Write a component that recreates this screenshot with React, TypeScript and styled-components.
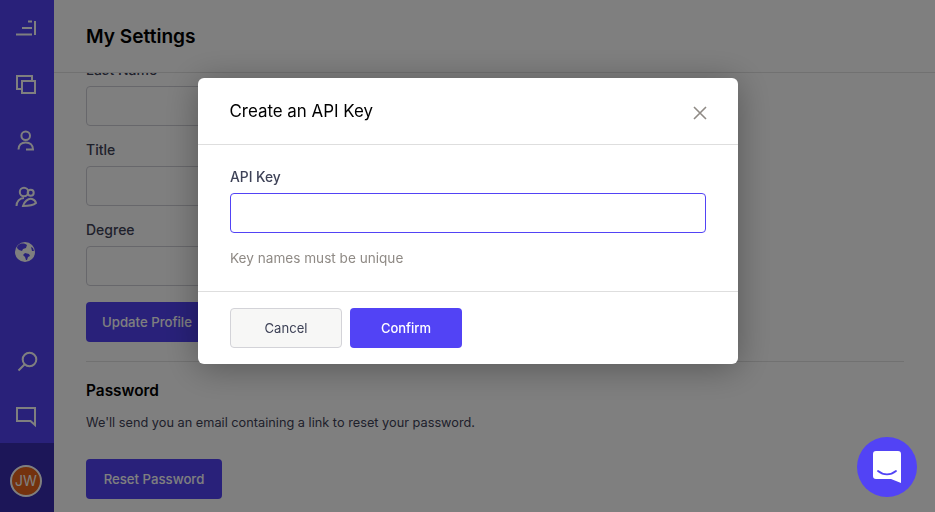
import React from "react";
import styled, { createGlobalStyle } from "styled-components";

const Global = createGlobalStyle`
  html, body { margin: 0; padding: 0; height: 100%; background: #fff; overflow: hidden; }
  #root { height: 100%; }
  * { box-sizing: border-box; }
  body { font-family: Inter, "Liberation Sans", sans-serif; -webkit-font-smoothing: antialiased; }
`;

const Page = styled.div`
  display: flex;
  width: 935px;
  height: 512px;
`;

const Sidebar = styled.nav`
  width: 54px;
  flex: none;
  display: flex;
  flex-direction: column;
  background: #5243f5;
  color: #fff;
`;

const NavGroup = styled.div`
  display: flex;
  flex-direction: column;
  align-items: center;
  gap: 26px;
  padding-top: 12px;
`;

const NavBottom = styled.div`
  margin-top: auto;
  display: flex;
  flex-direction: column;
  align-items: center;
  gap: 22px;
  padding: 0 0 11px;
`;

const NavIcon = styled.svg`
  display: block;
  width: 30px;
  height: 30px;
  fill: none;
  stroke: #fff;
  stroke-width: 2;
`;

const UserTray = styled.div`
  height: 69px;
  background: #382cb0;
  display: flex;
  align-items: center;
  justify-content: center;
  padding: 6px 2px 0 0;
`;

const Avatar = styled.div`
  width: 32px;
  height: 32px;
  border-radius: 50%;
  border: 2px solid #fff;
  background: #e8641c;
  color: #fff;
  font-size: 14px;
  display: flex;
  align-items: center;
  justify-content: center;
`;

const Main = styled.main`
  flex: 1;
  min-width: 0;
  display: flex;
  flex-direction: column;
`;

const Header = styled.header`
  height: 73px;
  flex: none;
  padding: 1px 32px 0;
  display: flex;
  align-items: center;
  border-bottom: 1px solid #e2e2e2;
  position: relative;
  z-index: 1;
  background: #fff;
`;

const PageTitle = styled.h1`
  margin: 0 0 1px;
  font-size: 19.1px;
  font-weight: 600;
  line-height: 28px;
  color: #000;
`;

const Scroller = styled.div`
  flex: 1;
  overflow: hidden;
  padding: 0 31px 0 32px;
`;

const ScrollInner = styled.div`
  margin-top: -12px;
`;

const Field = styled.div`
  display: flex;
  flex-direction: column;
  gap: 7px;
  margin-bottom: 15px;
  &:nth-child(3) {
    margin-bottom: 16px;
  }
`;

const FieldLabel = styled.label`
  font-size: 14px;
  line-height: 18px;
  font-weight: 500;
  color: #3e4257;
`;

const TextBox = styled.div`
  width: 420px;
  height: 40px;
  border: 1px solid #cfcfd6;
  border-radius: 4px;
  background: #fff;
`;

const PrimaryButton = styled.button`
  height: 40px;
  border: 0;
  border-radius: 4px;
  background: #5243f5;
  color: #fff;
  font: 500 13.2px Inter, "Liberation Sans", sans-serif;
  width: ${(p: { $w: number }) => p.$w}px;
  padding: 0;
  display: block;
`;

const Divider = styled.hr`
  border: 0;
  border-top: 1px solid #e2e2e2;
  margin: 19px 0 0;
`;

const SectionTitle = styled.h2`
  margin: 18px 0 0;
  font-size: 15.4px;
  line-height: 22px;
  font-weight: 600;
  color: #000;
`;

const SectionText = styled.p`
  margin: 12px 0 27px;
  font-size: 12.75px;
  line-height: 18px;
  color: #3e4257;
`;

const Overlay = styled.div`
  position: fixed;
  inset: 0;
  z-index: 5;
  background: rgba(0, 0, 0, 0.5);
  display: flex;
  justify-content: center;
  align-items: flex-start;
  padding-top: 78px;
`;

const Modal = styled.div`
  width: 540px;
  height: 286px;
  margin-left: 1px;
  background: #fff;
  border-radius: 6px;
  box-shadow: 0 4px 34px rgba(0, 0, 0, 0.32);
  display: flex;
  flex-direction: column;
`;

const ModalHeader = styled.div`
  height: 67px;
  flex: none;
  display: flex;
  align-items: center;
  justify-content: space-between;
  padding: 0 31px 0 31.5px;
  border-bottom: 1px solid #dedede;
`;

const ModalTitle = styled.h3`
  margin: 0;
  font-size: 16.9px;
  line-height: 24px;
  font-weight: 400;
  color: #000;
`;

const CloseIcon = styled.svg`
  width: 14px;
  height: 14px;
  stroke: #8f8a85;
  stroke-width: 1.6;
  fill: none;
  margin-top: 3px;
`;

const ModalBody = styled.div`
  flex: 1;
  padding: 22px 32px 0;
  display: flex;
  flex-direction: column;
  border-bottom: 1px solid #dedede;
`;

const ModalLabel = styled.label`
  font-size: 13.8px;
  line-height: 20px;
  font-weight: 500;
  color: #3e4257;
`;

const KeyInput = styled.input`
  width: 476px;
  height: 40px;
  margin-top: 6px;
  border: 1px solid #5243f5;
  border-radius: 4px;
  background: #fff;
  outline: none;
`;

const Hint = styled.p`
  margin: 15px 0 0;
  font-size: 13.6px;
  line-height: 20px;
  color: #8f8a85;
`;

const ModalFooter = styled.div`
  height: 72px;
  flex: none;
  display: flex;
  align-items: flex-start;
  gap: 8px;
  padding: 16px 32px 0;
`;

const CancelButton = styled.button`
  width: 112px;
  height: 40px;
  border: 1px solid #d3d3d8;
  border-radius: 4px;
  background: #f7f7f6;
  color: #3e4257;
  font: 400 13.1px Inter, "Liberation Sans", sans-serif;
  padding: 0 0 1px;
`;

const ConfirmButton = styled.button`
  width: 112px;
  height: 40px;
  border: 0;
  border-radius: 4px;
  background: #5243f5;
  color: #fff;
  font: 500 13px Inter, "Liberation Sans", sans-serif;
  padding: 0 0 1px;
`;

const Launcher = styled.div`
  position: fixed;
  z-index: 10;
  right: 18px;
  bottom: 15px;
  width: 60px;
  height: 60px;
  border-radius: 50%;
  background: #5243f5;
  display: flex;
  align-items: center;
  justify-content: center;
`;

export default function App() {
  return (
    <Page>
      <Global />
      <Sidebar>
        <NavGroup>
          <NavIcon viewBox="0 0 30 30">
            <path d="M16 9.500h4M10 16h10M4 22.500h16M23 9v14" />
          </NavIcon>
          <NavIcon viewBox="0 0 30 30">
            <path d="M10 21H5V8h15v5M10 13h13v12H10z" />
          </NavIcon>
          <NavIcon viewBox="0 0 30 30" strokeWidth="1.800">
            <circle cx="13.700" cy="11.700" r="4.300" />
            <path d="M6.500 25.500c0-4.500 3-7 7.200-7s7.300 2.500 7.300 7h-7" />
          </NavIcon>
          <NavIcon viewBox="0 0 30 30" strokeWidth="1.800">
            <circle cx="12" cy="12" r="4.200" />
            <circle cx="18.700" cy="12.700" r="3" />
            <path d="M4.500 26c0-4.500 3-8 7.500-8M11 26c1-4 5-8 9-7 2 .5 3.500 2 4 4-3 2.500-7 3-13 3z" />
          </NavIcon>
          <NavIcon viewBox="0 0 30 30" style={{ stroke: "none" }}>
            <circle cx="13" cy="16" r="10" fill="#fff" />
            <path d="M8 8c3-1 6 0 7 1l-1 3-3 1-1 2-3-1-2-2c0-2 1-3 3-4zM13 17l4 1 1 2-2 1-1 3h-1l-1-3-2-2zM19 11l2 1 1 3-2 0z" fill="#5243f5" />
          </NavIcon>
        </NavGroup>
        <NavBottom>
          <NavIcon viewBox="0 0 30 30">
            <circle cx="17.500" cy="9.500" r="6.800" />
            <path d="M12.500 14.500l-6 6" />
          </NavIcon>
          <NavIcon viewBox="0 0 30 30">
            <path d="M5 6h18v17l-4.500-4H5z" />
          </NavIcon>
        </NavBottom>
        <UserTray>
          <Avatar>JW</Avatar>
        </UserTray>
      </Sidebar>
      <Main>
        <Header>
          <PageTitle>My Settings</PageTitle>
        </Header>
        <Scroller>
          <ScrollInner>
            <Field>
              <FieldLabel>Last Name</FieldLabel>
              <TextBox />
            </Field>
            <Field>
              <FieldLabel>Title</FieldLabel>
              <TextBox />
            </Field>
            <Field>
              <FieldLabel>Degree</FieldLabel>
              <TextBox />
            </Field>
            <PrimaryButton $w={122}>Update Profile</PrimaryButton>
            <Divider />
            <SectionTitle>Password</SectionTitle>
            <SectionText>We'll send you an email containing a link to reset your password.</SectionText>
            <PrimaryButton $w={136}>Reset Password</PrimaryButton>
          </ScrollInner>
        </Scroller>
      </Main>
      <Overlay>
        <Modal>
          <ModalHeader>
            <ModalTitle>Create an API Key</ModalTitle>
            <CloseIcon viewBox="0 0 14 14">
              <path d="M1 1l12 12M13 1L1 13" />
            </CloseIcon>
          </ModalHeader>
          <ModalBody>
            <ModalLabel>API Key</ModalLabel>
            <KeyInput />
            <Hint>Key names must be unique</Hint>
          </ModalBody>
          <ModalFooter>
            <CancelButton>Cancel</CancelButton>
            <ConfirmButton>Confirm</ConfirmButton>
          </ModalFooter>
        </Modal>
      </Overlay>
      <Launcher>
        <svg width="28" height="32" viewBox="0 0 28 32">
          <path d="M3 0h22a3 3 0 0 1 3 3v29l-10-4H3a3 3 0 0 1-3-3V3a3 3 0 0 1 3-3z" fill="#fff" />
          <path d="M5 20c5.500 4.500 12.500 4.500 18 0" fill="none" stroke="#5243f5" strokeWidth="1.800" strokeLinecap="round" />
        </svg>
      </Launcher>
    </Page>
  );
}
